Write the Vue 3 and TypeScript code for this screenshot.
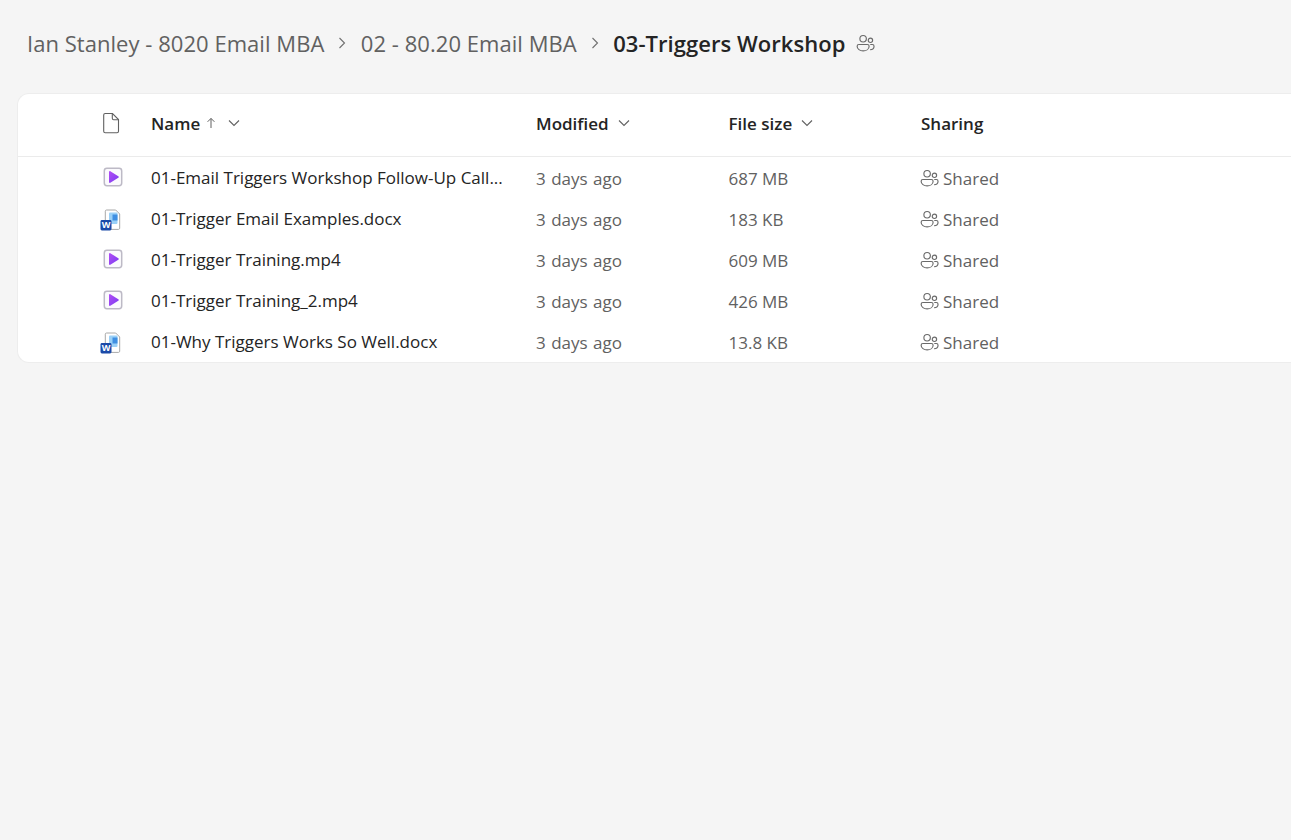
<script setup lang="ts">
interface FileRow {
  name: string
  kind: 'video' | 'word'
  size: string
}
const rows: FileRow[] = [
  { name: '01-Email Triggers Workshop Follow-Up Call...', kind: 'video', size: '687 MB' },
  { name: '01-Trigger Email Examples.docx', kind: 'word', size: '183 KB' },
  { name: '01-Trigger Training.mp4', kind: 'video', size: '609 MB' },
  { name: '01-Trigger Training_2.mp4', kind: 'video', size: '426 MB' },
  { name: '01-Why Triggers Works So Well.docx', kind: 'word', size: '13.8 KB' },
]
</script>

<template>
  <div class="page">
    <nav class="crumbs">
      <span class="crumb">Ian Stanley - 8020 Email MBA</span>
      <svg class="sep" viewBox="0 0 10 14"><path d="M2.5 2l5 5-5 5" /></svg>
      <span class="crumb">02 - 80.20 Email MBA</span>
      <svg class="sep" viewBox="0 0 10 14"><path d="M2.5 2l5 5-5 5" /></svg>
      <span class="crumb current">03-Triggers Workshop</span>
      <svg class="people big" viewBox="0 0 20 20">
        <circle cx="7.5" cy="5" r="3.400" />
        <circle cx="15.200" cy="6.600" r="2.300" />
        <path d="M3 11h9c1 0 1.800.8 1.800 1.800 0 3-2.900 5-6.300 5s-6.300-2-6.300-5c0-1 .8-1.800 1.800-1.800z" />
        <path d="M15 11h2.200c1 0 1.800.8 1.800 1.800 0 2.300-1.700 3.700-4.200 3.800" />
      </svg>
    </nav>

    <section class="card">
      <header class="row head">
        <div class="icon-cell">
          <svg class="doc" viewBox="0 0 18 22">
            <path d="M3.2 1.5h7.300l6 6v11.700c0 .8-.7 1.500-1.500 1.500H3.200c-.8 0-1.500-.7-1.500-1.500V3c0-.8.7-1.500 1.500-1.500z" />
            <path d="M10.300 1.700v4.600c0 .8.600 1.400 1.400 1.400h4.600" />
          </svg>
        </div>
        <div class="hcell">
          Name
          <svg class="arrow" viewBox="0 0 10 12"><path d="M5 11V1.500M1.600 4.800L5 1.400l3.400 3.400" /></svg>
          <svg class="chev name-chev" viewBox="0 0 12 8"><path d="M1 1.500l5 5 5-5" /></svg>
        </div>
        <div class="hcell">Modified <svg class="chev" viewBox="0 0 12 8"><path d="M1 1.500l5 5 5-5" /></svg></div>
        <div class="hcell">File size <svg class="chev" viewBox="0 0 12 8"><path d="M1 1.500l5 5 5-5" /></svg></div>
        <div class="hcell">Sharing</div>
      </header>

      <div class="rows">
        <div v-for="row in rows" :key="row.name" class="row item">
          <div class="icon-cell">
            <svg v-if="row.kind === 'video'" class="ficon video" viewBox="0 0 20 20">
              <defs>
                <linearGradient id="play" x1="0" y1="0" x2="1" y2="1">
                  <stop offset="0" stop-color="#b24df5" />
                  <stop offset="1" stop-color="#7a3cf0" />
                </linearGradient>
              </defs>
              <rect x="1.300" y="1.300" width="17.400" height="17.400" rx="2.600" fill="#fbfafd" stroke="#bdbac6" stroke-width="1.500" />
              <path d="M6 5c0-.7.700-1.100 1.300-.8l8 5c.6.400.6 1.200 0 1.600l-8 5c-.6.300-1.300-.1-1.300-.8z" fill="url(#play)" />
            </svg>
            <svg v-else class="ficon word" viewBox="0 0 22 22">
              <path d="M6.500 1h9.200l4 4v14.200c0 .7-.5 1.200-1.200 1.200H6.500c-.7 0-1.200-.5-1.200-1.200V2.200C5.300 1.500 5.800 1 6.500 1z" fill="#fff" stroke="#a8a8a8" />
              <rect x="9" y="3.500" width="8.500" height="11.500" rx="1" fill="#9ad0f7" />
              <rect x="12.500" y="5.500" width="5" height="6" fill="#3f8fe2" />
              <rect x="0.500" y="11" width="11" height="10.500" rx="1.400" fill="#1b4aa8" />
              <text x="6" y="19.300" class="w">W</text>
            </svg>
          </div>
          <div class="name">{{ row.name }}</div>
          <div class="meta date">3 days ago</div>
          <div class="meta">{{ row.size }}</div>
          <div class="meta shared">
            <svg class="people" viewBox="0 0 20 20">
              <circle cx="7.500" cy="5" r="3.400" />
              <circle cx="15.200" cy="6.600" r="2.300" />
              <path d="M3 11h9c1 0 1.800.8 1.800 1.800 0 3-2.900 5-6.300 5s-6.300-2-6.300-5c0-1 .8-1.800 1.800-1.800z" />
              <path d="M15 11h2.200c1 0 1.800.8 1.800 1.800 0 2.300-1.700 3.700-4.200 3.800" />
            </svg>
            Shared
          </div>
        </div>
      </div>
    </section>
  </div>
</template>

<style>
html,
body {
  margin: 0;
  background: #f5f5f5;
  overflow: hidden;
}
</style>

<style scoped>
.page {
  width: 1291px;
  height: 840px;
  overflow: hidden;
  background: #f5f5f5;
  font-family: "Open Sans", "Noto Sans", "Liberation Sans", sans-serif;
  color: #242424;
}
.crumbs {
  display: flex;
  align-items: center;
  height: 28px;
  padding: 29px 0 35px 27px;
  font-size: 22px;
  letter-spacing: 0.04px;
  color: #616161;
  white-space: nowrap;
}
.crumb.current {
  color: #242424;
  font-weight: 600;
}
.sep {
  width: 10px;
  height: 14px;
  margin: 0 13.500px 0 13px;
  fill: none;
  stroke: #707070;
  stroke-width: 1.100;
}
.people {
  width: 19px;
  height: 19px;
  flex: none;
  fill: none;
  stroke: #6a6a6a;
  stroke-width: 1.200;
}
.people.big {
  margin-left: 11px;
}
.card {
  width: 1400px;
  height: 270px;
  margin-left: 17px;
  margin-top: 1px;
  box-sizing: border-box;
  background: #fff;
  border: 1px solid #ededed;
  border-right: 0;
  border-radius: 12px;
}
.row {
  display: grid;
  grid-template-columns: 133px 385px 192.500px 192.500px 1fr;
  align-items: center;
  font-size: 17px;
}
.head {
  height: 63px;
  padding-bottom: 1px;
  box-sizing: border-box;
  border-bottom: 1px solid #ebebeb;
  font-weight: 600;
}
.rows {
  padding-top: 1px;
}
.item {
  height: 41px;
}
.head .hcell,
.head .icon-cell {
  margin-top: -3px;
}
.icon-cell {
  display: flex;
  justify-content: flex-end;
  padding-right: 30px;
}
.hcell {
  display: flex;
  align-items: center;
  white-space: nowrap;
}
.doc {
  width: 18px;
  height: 22px;
  margin-right: 1px;
  fill: none;
  stroke: #616161;
  stroke-width: 1.100;
}
.arrow {
  width: 10px;
  height: 12px;
  margin-left: 6px;
  fill: none;
  stroke: #616161;
  stroke-width: 1;
}
.chev {
  width: 12px;
  height: 8px;
  margin-left: 9px;
  fill: none;
  stroke: #616161;
  stroke-width: 1.100;
}
.name-chev {
  margin-left: 12px;
}
.ficon {
  width: 20px;
  height: 20px;
}
.ficon.video {
  margin-top: -3px;
  margin-right: -2px;
}
.ficon.word {
  width: 22px;
  height: 22px;
  margin-right: -1px;
}
.w {
  font-size: 9px;
  font-weight: 700;
  fill: #fff;
  text-anchor: middle;
}
.name {
  white-space: nowrap;
  margin-top: -2px;
}
.meta {
  color: #616161;
}
.date {
  word-spacing: 1px;
}
.shared {
  display: flex;
  align-items: center;
  gap: 3px;
}
.shared .people {
  margin-left: -1px;
  margin-right: 1px;
}
</style>
